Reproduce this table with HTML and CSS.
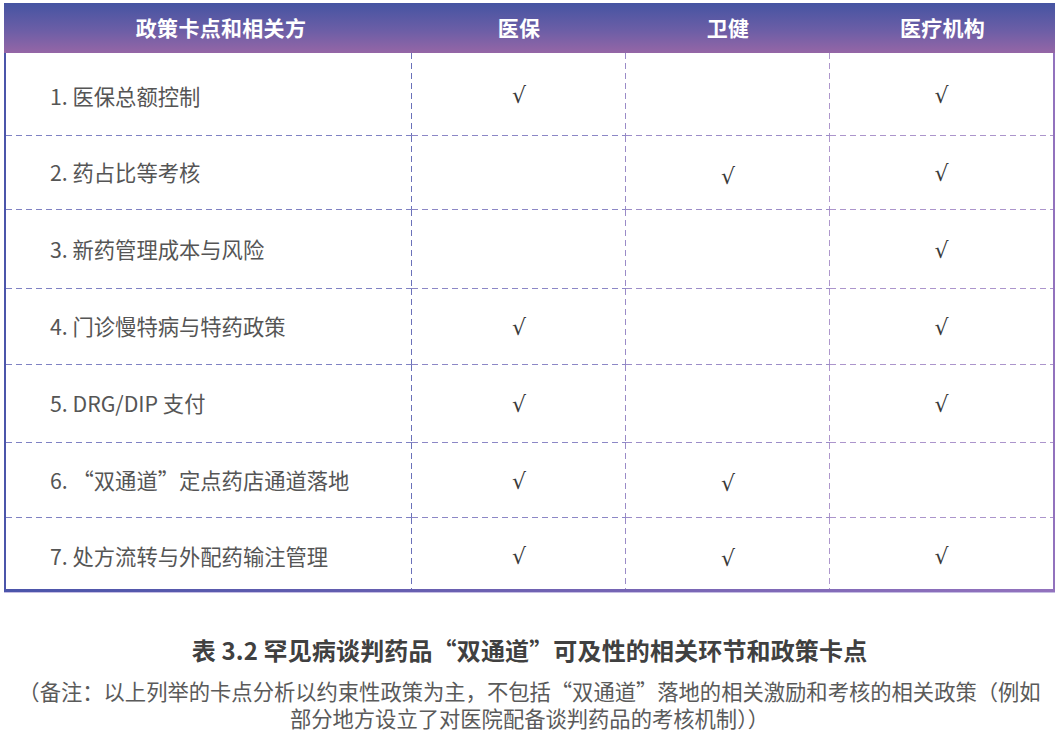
FILE: index.html
```html
<!DOCTYPE html>
<html lang="zh-CN">
<head>
<meta charset="utf-8">
<title>表 3.2</title>
<link rel="stylesheet" href="styles.css">
</head>
<body>
<div class="page">
  <div class="table">
    <div class="thead">
      <div class="th th-first">政策卡点和相关方</div>
      <div class="th">医保</div>
      <div class="th">卫健</div>
      <div class="th">医疗机构</div>
    </div>
    <div class="tbody">
      <div class="row r1">
        <div class="cell c1 label">1. 医保总额控制</div>
        <div class="cell c2 check">√</div>
        <div class="cell c3 check"></div>
        <div class="cell c4 check">√</div>
      </div>
      <div class="row r2">
        <div class="cell c1 label">2. 药占比等考核</div>
        <div class="cell c2 check"></div>
        <div class="cell c3 check low">√</div>
        <div class="cell c4 check">√</div>
      </div>
      <div class="row r3">
        <div class="cell c1 label">3. 新药管理成本与风险</div>
        <div class="cell c2 check"></div>
        <div class="cell c3 check"></div>
        <div class="cell c4 check">√</div>
      </div>
      <div class="row r4">
        <div class="cell c1 label">4. 门诊慢特病与特药政策</div>
        <div class="cell c2 check">√</div>
        <div class="cell c3 check"></div>
        <div class="cell c4 check">√</div>
      </div>
      <div class="row r5">
        <div class="cell c1 label">5. DRG/DIP 支付</div>
        <div class="cell c2 check">√</div>
        <div class="cell c3 check"></div>
        <div class="cell c4 check">√</div>
      </div>
      <div class="row r6">
        <div class="cell c1 label">6. “双通道”定点药店通道落地</div>
        <div class="cell c2 check">√</div>
        <div class="cell c3 check low">√</div>
        <div class="cell c4 check"></div>
      </div>
      <div class="row r7 last">
        <div class="cell c1 label">7. 处方流转与外配药输注管理</div>
        <div class="cell c2 check">√</div>
        <div class="cell c3 check low">√</div>
        <div class="cell c4 check">√</div>
      </div>
    </div>
  </div>
  <p class="caption">表 3.2 罕见病谈判药品“双通道”可及性的相关环节和政策卡点</p>
  <p class="note">（备注：以上列举的卡点分析以约束性政策为主，不包括“双通道”落地的相关激励和考核的相关政策（例如<br>部分地方设立了对医院配备谈判药品的考核机制））</p>
</div>
</body>
</html>
```

FILE: styles.css
```css
html, body {
  margin: 0;
  padding: 0;
  background: #ffffff;
}

body {
  font-family: "Noto Sans CJK SC", "Noto Sans", sans-serif;
}

.page {
  padding: 3px 4px 0 4px;
  width: 1051px;
}

.table {
  width: 1051px;
}

.thead {
  display: grid;
  grid-template-columns: 408px 214px 204px 225px;
  height: 50px;
  background: linear-gradient(to bottom, #4554a2 0%, #6c5ea6 55%, #9566a6 100%);
}

.th {
  display: flex;
  align-items: center;
  justify-content: center;
  padding-bottom: 2px;
  color: #ffffff;
  font-weight: 700;
  font-size: 21px;
  letter-spacing: 0.3px;
}

.th-first {
  padding-left: 26px;
}

.tbody {
  border-style: solid;
  border-width: 0 2px 3px 2px;
  border-image: linear-gradient(to right, #4b55aa, #6f62b2 50%, #9272bd) 1;
  box-shadow: 0 1px 0 #c6bde3;
}

.row {
  display: grid;
  grid-template-columns: 406px 214px 204px 223px;
}

.r1 { height: 83px; }
.r2 { height: 74px; }
.r3 { height: 79px; }
.r4 { height: 76px; }
.r5 { height: 78px; }
.r6 { height: 75px; }
.r7 { height: 71px; }

.cell {
  display: flex;
  align-items: center;
  background-repeat: repeat-x, repeat-y;
  background-position: left bottom, right top;
  background-size: 10px 1px, 1px 10px;
}

.c1 {
  background-image:
    linear-gradient(to right, #7f82c3 6px, transparent 6px),
    linear-gradient(to bottom, #6a71b9 6px, transparent 6px);
}
.c2 {
  background-image:
    linear-gradient(to right, #8c87c6 6px, transparent 6px),
    linear-gradient(to bottom, #9a8bc7 6px, transparent 6px);
}
.c3 {
  background-image:
    linear-gradient(to right, #9c8dc8 6px, transparent 6px),
    linear-gradient(to bottom, #ae97cc 6px, transparent 6px);
}
.c4 {
  background-image:
    linear-gradient(to right, #ac95cc 6px, transparent 6px);
}

.last .c1 {
  background-image: linear-gradient(to bottom, #6a71b9 6px, transparent 6px);
  background-position: right top;
  background-repeat: repeat-y;
  background-size: 1px 10px;
}
.last .c2 {
  background-image: linear-gradient(to bottom, #9a8bc7 6px, transparent 6px);
  background-position: right top;
  background-repeat: repeat-y;
  background-size: 1px 10px;
}
.last .c3 {
  background-image: linear-gradient(to bottom, #ae97cc 6px, transparent 6px);
  background-position: right top;
  background-repeat: repeat-y;
  background-size: 1px 10px;
}
.last .c4 {
  background-image: none;
}

.label {
  padding-left: 44px;
  padding-bottom: 3px;
  font-size: 21.3px;
  color: #555555;
}

.r1 .label {
  padding-bottom: 0;
  padding-top: 2px;
}

.r7 .label {
  padding-bottom: 0;
  padding-top: 3px;
}

.check {
  justify-content: center;
  font-family: "DejaVu Serif", "Liberation Serif", serif;
  font-size: 22px;
  color: #3a3a3a;
  padding-top: 1px;
}

.check.low {
  padding-top: 6px;
}

.r7 .check {
  padding-top: 5px;
}

.r7 .check.low {
  padding-top: 9px;
}

.caption {
  margin: 42px 0 0 0;
  text-align: center;
  font-size: 24px;
  line-height: 32px;
  font-weight: 700;
  letter-spacing: 0.15px;
  color: #404040;
}

.note {
  margin: 11px 0 0 0;
  text-align: center;
  font-size: 21.3px;
  line-height: 27px;
  color: #5a5a5a;
}
```
